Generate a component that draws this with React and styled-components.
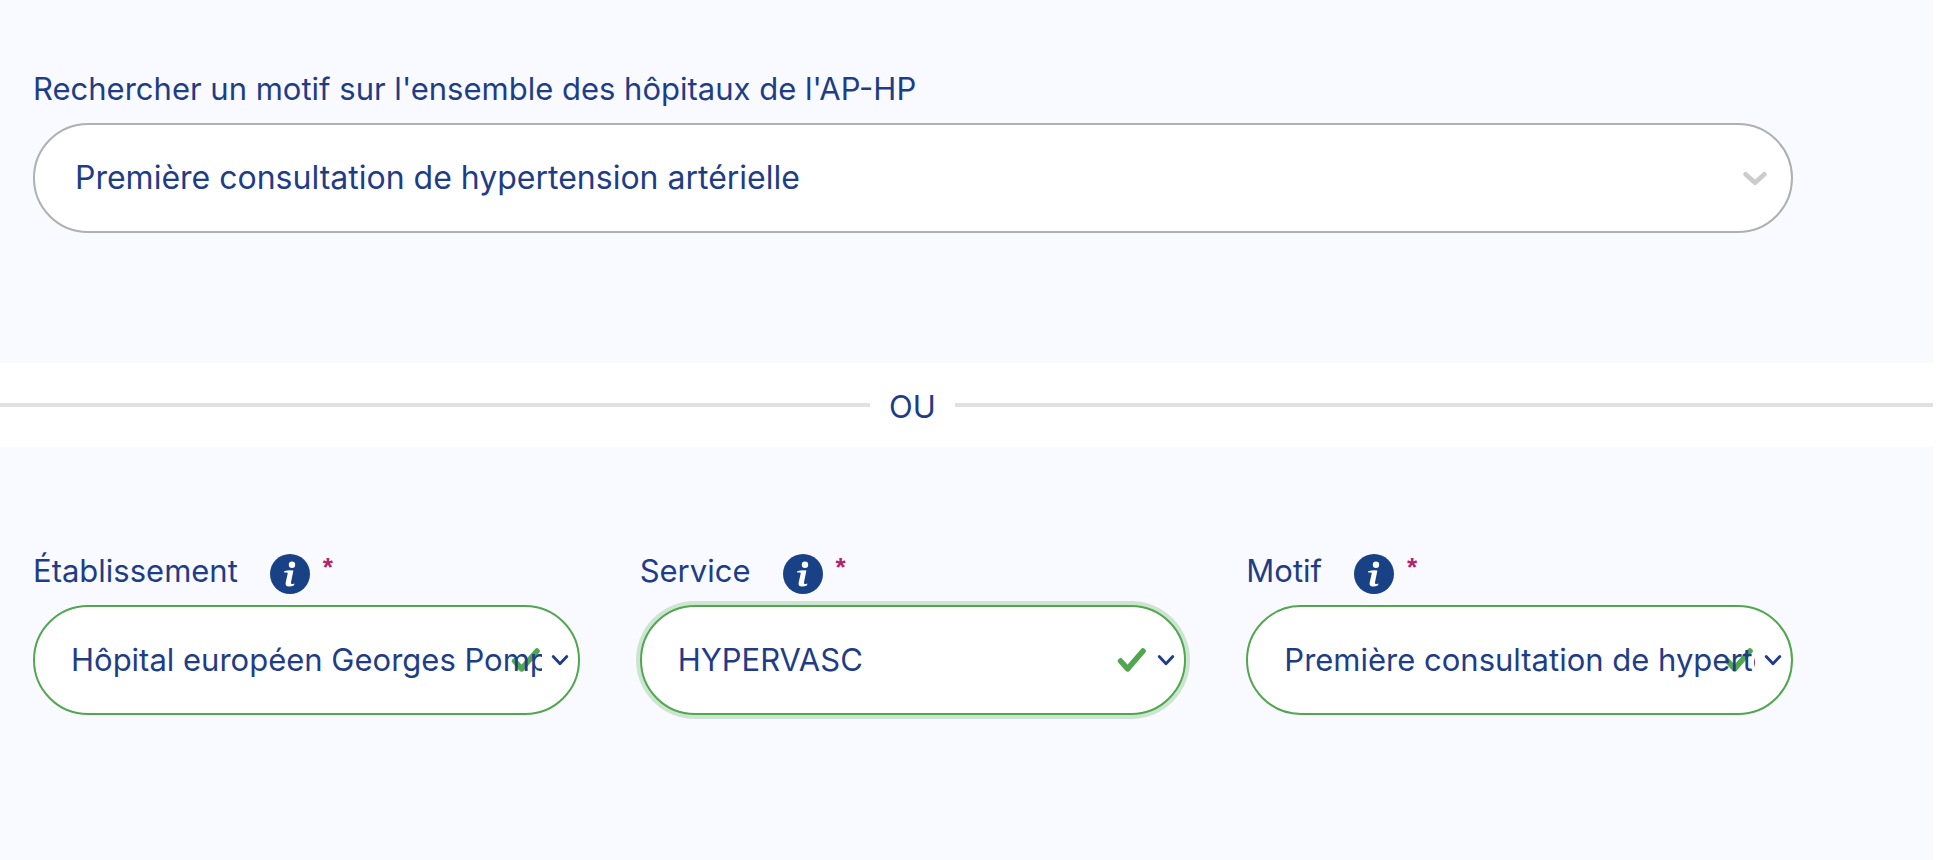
import React from "react";
import styled, { createGlobalStyle, css } from "styled-components";

const GlobalStyle = createGlobalStyle`
  *, *::before, *::after { box-sizing: border-box; }
  body {
    margin: 0;
    background: #ffffff;
    color: #1f3d87;
    font-family: Inter, Roboto, "Liberation Sans", sans-serif;
    font-size: 31px;
    line-height: 40px;
  }
`;

const Page = styled.main`
  min-height: 100vh;
  display: flex;
  flex-direction: column;
`;

const Section = styled.section`
  margin-right: 15px;
  padding: ${(p) => p.$top}px 140px 130px 33px;
  background: #f9faff;
  ${(p) => p.$grow && css`flex: 1;`}
`;

const Field = styled.div`
  display: flex;
  flex-direction: column;
  min-width: 0;
`;

const LabelRow = styled.div`
  display: flex;
  align-items: flex-start;
  margin-bottom: ${(p) => p.$gap}px;
`;

const Label = styled.label`
  margin-right: 32px;
`;

const InfoButton = styled.button`
  display: block;
  width: 40px;
  height: 40px;
  margin: 3px 12px 0 0;
  padding: 0;
  border: 0;
  border-radius: 50%;
  background: #194185;
  cursor: pointer;

  svg { display: block; }
`;

const Required = styled.span`
  color: #b0246a;
  font-family: "Liberation Sans", sans-serif;
  font-size: 26px;
  font-style: italic;
  font-weight: 700;
  line-height: 32px;
`;

const Control = styled.div`
  position: relative;
  height: 110px;
  border: 2px solid ${(p) => (p.$valid ? "#52a650" : "#b0b0b0")};
  border-radius: 55px;
  background: #ffffff;
  ${(p) => p.$focused && css`box-shadow: 0 0 0 4px #cbe5d0;`}
`;

const Select = styled.select`
  position: relative;
  display: block;
  width: 100%;
  height: 100%;
  padding: 0 36px;
  border: 0;
  border-radius: 55px;
  outline: 0;
  appearance: none;
  background: transparent;
  color: inherit;
  font: inherit;
  cursor: pointer;
  ${(p) => p.$wide && css`
    padding: 0 64px 0 40px;
    font-size: 32px;
  `}
`;

const Mark = styled.svg`
  position: absolute;
  top: 0;
  bottom: 0;
  right: ${(p) => p.$right}px;
  margin: auto 0;
  pointer-events: none;
`;

const Columns = styled.div`
  display: grid;
  grid-template-columns: repeat(3, minmax(0, 1fr));
  gap: 60px;
`;

const Divider = styled.div`
  display: flex;
  align-items: center;
  height: 84px;
  margin-right: 15px;
`;

const Rule = styled.span`
  flex: ${(p) => p.$grow} 1 0;
  height: 4px;
  background: #e1e1e1;
`;

const Or = styled.span`
  width: 85px;
  padding-top: 4px;
  text-align: center;
`;

function InfoIcon() {
  return (
    <svg width="40" height="40" viewBox="0 0 40 40" aria-hidden="true">
      <circle cx="22" cy="10.7" r="3.2" fill="#fff" />
      <path
        d="M14.2 17.3Q18.5 15.6 23.4 16.4L21 28.2Q20.7 30 21.8 30Q22.8 30 24.4 29.4L24.1 31.2Q21.6 32.5 18.8 32.4Q14.9 32.2 15.7 28.4L17.7 19.6Q17.9 18.6 16.8 18.5L14.1 18.5Z"
        fill="#fff"
      />
    </svg>
  );
}

function ValidatedSelect({ id, label, value, focused }) {
  return (
    <Field>
      <LabelRow $gap={11}>
        <Label htmlFor={id}>{label}</Label>
        <InfoButton type="button" aria-label={`Information : ${label}`}>
          <InfoIcon />
        </InfoButton>
        <Required aria-hidden="true">*</Required>
      </LabelRow>
      <Control $valid $focused={focused}>
        <Mark $right={37} width="30" height="26" viewBox="0 0 30 26" aria-hidden="true">
          <path d="M3.6 14L10.6 21.8L26 4" fill="none" stroke="#52a650" strokeWidth="5.6" strokeLinecap="round" strokeLinejoin="round" />
        </Mark>
        <Select id={id} defaultValue={value} required>
          <option>{value}</option>
        </Select>
        <Mark $right={9} width="18" height="12" viewBox="0 0 18 12" aria-hidden="true">
          <path d="M2.2 2.5L9 9.8L15.8 2.5" fill="none" stroke="#1f3d87" strokeWidth="2.8" strokeLinecap="round" strokeLinejoin="round" />
        </Mark>
      </Control>
    </Field>
  );
}

export default function App() {
  return (
    <>
      <GlobalStyle />
      <Page>
        <Section $top={69}>
          <Field>
            <LabelRow $gap={14}>
              <Label htmlFor="recherche">Rechercher un motif sur l'ensemble des hôpitaux de l'AP-HP</Label>
            </LabelRow>
            <Control>
              <Select id="recherche" $wide defaultValue="hta">
                <option value="hta">Première consultation de hypertension artérielle</option>
              </Select>
              <Mark $right={24} width="24" height="16" viewBox="0 0 24 16" aria-hidden="true">
                <path d="M2.6 4.2L12 12.8L21.4 4.2" fill="none" stroke="#cccccc" strokeWidth="4.6" strokeLinecap="round" strokeLinejoin="round" />
              </Mark>
            </Control>
          </Field>
        </Section>
        <Divider>
          <Rule $grow={870} />
          <Or>OU</Or>
          <Rule $grow={978} />
        </Divider>
        <Section $top={104} $grow>
          <Columns>
            <ValidatedSelect id="etablissement" label="Établissement" value="Hôpital européen Georges Pompidou" />
            <ValidatedSelect id="service" label="Service" value="HYPERVASC" focused />
            <ValidatedSelect id="motif" label="Motif" value="Première consultation de hypertension artérielle" />
          </Columns>
        </Section>
      </Page>
    </>
  );
}
